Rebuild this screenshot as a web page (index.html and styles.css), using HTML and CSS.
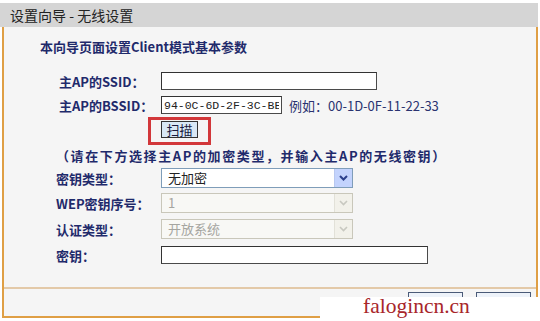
FILE: index.html
```html
<!DOCTYPE html>
<html lang="zh-CN">
<head>
    <meta charset="UTF-8">
    <title>设置向导 - 无线设置</title>
    <link rel="stylesheet" href="styles.css">
</head>
<body>
    <div class="page">
        <div class="title-bar">设置向导 - 无线设置</div>
        <div class="panel">
            <div class="panel-body">
                <p class="intro">本向导页面设置Client模式基本参数</p>
                <div class="form">
                    <div class="row row-ssid">
                        <label class="label">主AP的SSID：</label>
                        <input class="text-input input-ssid" type="text">
                    </div>
                    <div class="row row-bssid">
                        <label class="label">主AP的BSSID：</label>
                        <input class="text-input input-bssid" type="text" value="94-0C-6D-2F-3C-BE">
                        <span class="hint">例如：00-1D-0F-11-22-33</span>
                    </div>
                    <div class="row row-scan">
                        <span class="label"></span>
                        <span class="mark-box"><button class="btn-scan" type="button">扫描</button></span>
                    </div>
                    <div class="row row-note">
                        <span class="note">（请在下方选择主AP的加密类型，并输入主AP的无线密钥）</span>
                    </div>
                    <div class="row row-type">
                        <label class="label">密钥类型：</label>
                        <div class="select">
                            <span class="select-text">无加密</span>
                            <span class="select-arrow">
                                <svg width="9" height="6" viewBox="0 0 9 6"><path d="M1 1 L4.5 4.5 L8 1" fill="none" stroke="#2b3f8c" stroke-width="2"/></svg>
                            </span>
                        </div>
                    </div>
                    <div class="row row-wep">
                        <label class="label">WEP密钥序号：</label>
                        <div class="select disabled">
                            <span class="select-text">1</span>
                            <span class="select-arrow">
                                <svg width="9" height="6" viewBox="0 0 9 6"><path d="M1 1 L4.5 4.5 L8 1" fill="none" stroke="#c8c8c0" stroke-width="1.6"/></svg>
                            </span>
                        </div>
                    </div>
                    <div class="row row-auth">
                        <label class="label">认证类型：</label>
                        <div class="select disabled">
                            <span class="select-text">开放系统</span>
                            <span class="select-arrow">
                                <svg width="9" height="6" viewBox="0 0 9 6"><path d="M1 1 L4.5 4.5 L8 1" fill="none" stroke="#c8c8c0" stroke-width="1.6"/></svg>
                            </span>
                        </div>
                    </div>
                    <div class="row row-key">
                        <label class="label">密钥：</label>
                        <input class="text-input input-key" type="text">
                    </div>
                </div>
            </div>
            <div class="panel-foot">
                <button class="btn-step" type="button">上一步</button>
                <button class="btn-step" type="button">下一步</button>
            </div>
        </div>
        <div class="watermark">falogincn.cn</div>
    </div>
</body>
</html>
```

FILE: styles.css
```css
body {
    margin: 0;
    background-color: #ffffff;
    font-family: "Noto Sans CJK SC", "Noto Sans", sans-serif;
    font-size: 13px;
    color: #1f2a6b;
}

.page {
    position: relative;
    width: 540px;
    height: 321px;
    padding-top: 3px;
    box-sizing: border-box;
}

.title-bar {
    height: 24px;
    margin-right: 2px;
    background-color: #d5d5d5;
    color: #222;
    font-size: 14px;
    line-height: 24px;
    padding-left: 10px;
}

.panel {
    margin-left: 2px;
    width: 532px;
    border-left: 2px solid #df9f45;
    border-right: 2px solid #df9f45;
    border-bottom: 2px solid #df9f45;
    background-color: #f5f5f5;
}

.panel-body {
    height: 262px;
    padding-top: 10px;
    box-sizing: border-box;
    border-bottom: 2px solid #e3c9a8;
}

.intro {
    margin: 0 0 0 36px;
    height: 20px;
    line-height: 20px;
    font-weight: bold;
}

.form {
    margin-top: 15px;
    padding-left: 52px;
}

.row {
    display: flex;
    align-items: center;
}

.label {
    width: 105px;
    flex-shrink: 0;
    font-weight: bold;
}

.row-ssid { height: 18px; }
.row-bssid { height: 18px; margin-top: 6px; }
.row-scan { height: 27px; margin-top: 3px; }
.row-note { height: 16px; margin-top: 3px; }
.row-type { height: 20px; margin-top: 5px; }
.row-wep { height: 20px; margin-top: 5px; }
.row-auth { height: 20px; margin-top: 6px; }
.row-key { height: 18px; margin-top: 7px; }

.row-ssid .label,
.row-bssid .label {
    padding-left: 3px;
    width: 102px;
}

.text-input {
    height: 18px;
    box-sizing: border-box;
    border: 1px solid #4a4a4a;
    border-top-color: #333;
    border-left-color: #333;
    background-color: #ffffff;
    padding: 0 3px;
    margin: 0;
    font-family: "Liberation Mono", monospace;
    font-size: 11.5px;
    color: #222;
}

.input-ssid { width: 216px; }
.input-bssid { width: 121px; padding: 0 2px; }
.input-key { width: 267px; }

.hint {
    margin-left: 7px;
    color: #2a3370;
}

.mark-box {
    margin-left: -13px;
    border: 3px solid #d2373a;
    padding: 1px 10px 4px 10px;
    display: flex;
}

.btn-scan {
    width: 37px;
    height: 17px;
    padding: 0;
    border: 1px solid #333;
    background-color: #d9e8f5;
    font-family: inherit;
    font-size: 13px;
    line-height: 15px;
    color: #1a1a40;
}

.note {
    font-weight: bold;
    letter-spacing: 1.6px;
}

.select {
    width: 192px;
    height: 20px;
    box-sizing: border-box;
    border: 1px solid #7f9db9;
    background-color: #ffffff;
    display: flex;
    align-items: center;
    color: #222;
}

.select-text {
    flex: 1;
    padding-left: 6px;
    line-height: 18px;
}

.select-arrow {
    width: 17px;
    height: 18px;
    background-color: #c3d3fd;
    border-left: 1px solid #b8c8f0;
    display: flex;
    align-items: center;
    justify-content: center;
}

.select.disabled {
    border-color: #c9c7ba;
    background-color: #f8f8f5;
    color: #a5a5a0;
}

.select.disabled .select-arrow {
    background-color: #f2f1ea;
    border-left-color: #e2e1d8;
}

.panel-foot {
    height: 27px;
    display: flex;
    justify-content: flex-end;
    gap: 13px;
    padding-right: 5px;
    padding-top: 3px;
    box-sizing: border-box;
}

.btn-step {
    width: 55px;
    height: 20px;
    padding: 0;
    border: 1px solid #4b5b78;
    background-color: #eef3fa;
    font-family: inherit;
    font-size: 12px;
    color: #222;
}

.watermark {
    position: absolute;
    left: 320px;
    top: 297px;
    width: 220px;
    height: 24px;
    background-color: #ffffff;
    padding-left: 43px;
    box-sizing: border-box;
    font-family: "Liberation Serif", serif;
    font-size: 21.5px;
    line-height: 18px;
    color: #a8262a;
}
```
